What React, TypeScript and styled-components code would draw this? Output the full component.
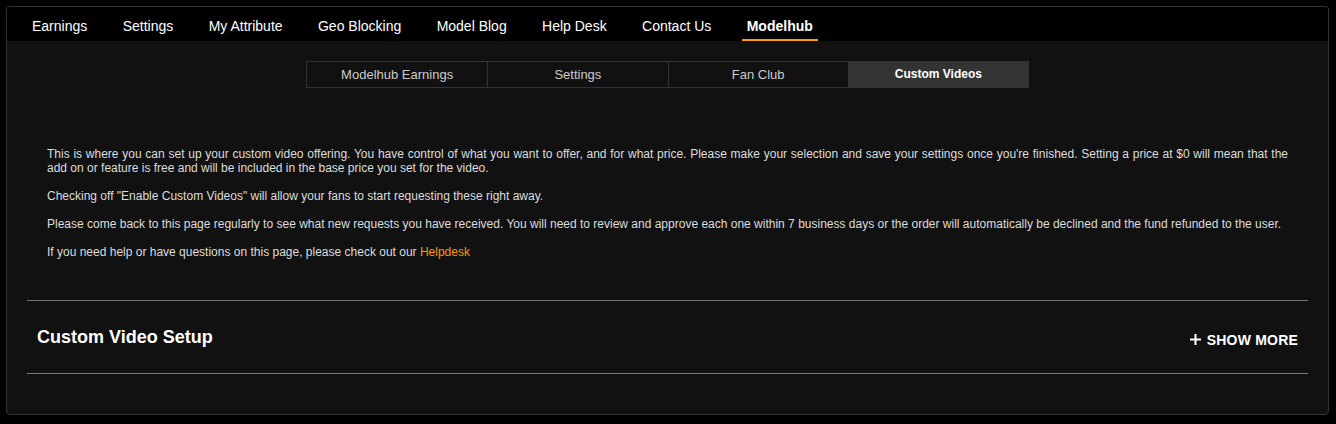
import React from 'react';
import styled, { createGlobalStyle } from 'styled-components';

const GlobalStyle = createGlobalStyle`
  html, body {
    margin: 0;
    padding: 0;
    background: #000;
    font-family: 'Liberation Sans', Arial, sans-serif;
  }
  * {
    box-sizing: border-box;
  }
`;

const Panel = styled.div`
  margin: 6px 7px 6px 6px;
  border: 1px solid #333;
  border-radius: 4px;
  background: #111;
  overflow: hidden;
`;

const Nav = styled.nav`
  display: flex;
  gap: 25.4px;
  height: 34px;
  padding-left: 20px;
  background: #000;
`;

const NavItem = styled.a<{ $active?: boolean }>`
  display: block;
  height: 34px;
  padding: 5px 5px 0;
  line-height: 29px;
  font-size: 14px;
  color: #fff;
  font-weight: ${(p) => (p.$active ? 700 : 400)};
  text-decoration: none;
  border-bottom: 2px solid ${(p) => (p.$active ? '#ff9900' : 'transparent')};
`;

const Content = styled.div`
  padding: 20px 20px 40px;
`;

const Tabs = styled.div`
  display: grid;
  grid-template-columns: repeat(4, 1fr);
  width: 723px;
  margin: 0 auto;
  border: 1px solid #333;
`;

const Tab = styled.div<{ $active?: boolean }>`
  height: 25px;
  line-height: 25px;
  text-align: center;
  font-size: ${(p) => (p.$active ? '12px' : '13px')};
  color: ${(p) => (p.$active ? '#fff' : '#ccc')};
  font-weight: ${(p) => (p.$active ? 700 : 400)};
  background: ${(p) => (p.$active ? '#333' : 'transparent')};
  & + & {
    border-left: 1px solid #333;
  }
`;

const Intro = styled.div`
  padding: 59px 20px 41px;
`;

const Para = styled.p`
  margin: 0 0 14px;
  font-size: 12px;
  line-height: 14px;
  color: #ddd;
  text-align: justify;
  &:last-child {
    margin-bottom: 0;
  }
`;

const Link = styled.a`
  color: #ff9900;
  text-decoration: none;
`;

const Section = styled.section`
  border-top: 1px solid #777;
  border-bottom: 1px solid #777;
`;

const SectionHeader = styled.div`
  display: flex;
  align-items: center;
  justify-content: space-between;
  height: 72px;
  padding: 0 10px;
`;

const SectionTitle = styled.h2`
  margin: 0;
  font-size: 18px;
  line-height: 20px;
  font-weight: 700;
  color: #fff;
`;

const ShowMore = styled.button`
  display: flex;
  align-items: center;
  gap: 6px;
  margin-top: 5px;
  padding: 0;
  border: 0;
  background: none;
  font-family: inherit;
  font-size: 14px;
  font-weight: 700;
  letter-spacing: 0.2px;
  color: #fff;
  cursor: pointer;
`;

const navItems = [
  'Earnings',
  'Settings',
  'My Attribute',
  'Geo Blocking',
  'Model Blog',
  'Help Desk',
  'Contact Us',
  'Modelhub',
];

const tabs = ['Modelhub Earnings', 'Settings', 'Fan Club', 'Custom Videos'];

export default function App() {
  return (
    <>
      <GlobalStyle />
      <Panel>
        <Nav>
          {navItems.map((item) => (
            <NavItem key={item} $active={item === 'Modelhub'}>
              {item}
            </NavItem>
          ))}
        </Nav>
        <Content>
          <Tabs>
            {tabs.map((t) => (
              <Tab key={t} $active={t === 'Custom Videos'}>
                {t}
              </Tab>
            ))}
          </Tabs>
          <Intro>
            <Para>
              This is where you can set up your custom video offering. You have control of what you want to offer, and
              for what price. Please make your selection and save your settings once you're finished. Setting a price at
              $0 will mean that the add on or feature is free and will be included in the base price you set for the
              video.
            </Para>
            <Para>Checking off "Enable Custom Videos" will allow your fans to start requesting these right away.</Para>
            <Para>
              Please come back to this page regularly to see what new requests you have received. You will need to
              review and approve each one within 7 business days or the order will automatically be declined and the
              fund refunded to the user.
            </Para>
            <Para>
              If you need help or have questions on this page, please check out our <Link>Helpdesk</Link>
            </Para>
          </Intro>
          <Section>
            <SectionHeader>
              <SectionTitle>Custom Video Setup</SectionTitle>
              <ShowMore>
                <svg width="11" height="11" viewBox="0 0 11 11">
                  <path d="M5.5 0v11M0 5.5h11" stroke="#fff" strokeWidth="2" />
                </svg>
                SHOW MORE
              </ShowMore>
            </SectionHeader>
          </Section>
        </Content>
      </Panel>
    </>
  );
}
